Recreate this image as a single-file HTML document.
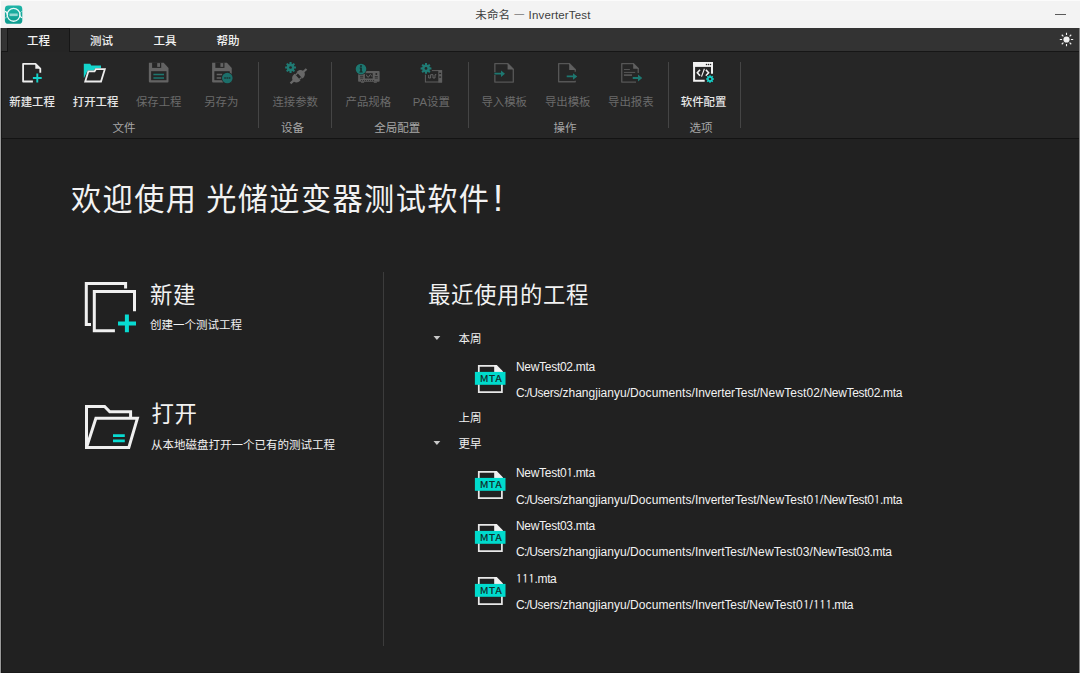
<!DOCTYPE html>
<html lang="zh-CN">
<head>
<meta charset="utf-8">
<title>未命名 — InverterTest</title>
<style>
*{box-sizing:border-box;margin:0;padding:0}
html,body{width:1080px;height:673px;overflow:hidden;background:#212121}
body{position:relative;font-family:"Liberation Sans","Noto Sans CJK SC",sans-serif;color:#f0f0f0;font-size:12px}
.abs{position:absolute}
svg{position:absolute;overflow:visible}
#titlebar{left:0;top:0;width:1080px;height:28px;background:#f3f3f3;border-top:1px solid #fbfbfb}
#title{left:475.3px;top:0;height:28px;line-height:29px;color:#404040;font-size:11.5px;white-space:pre;letter-spacing:0.15px}
#title i{font-style:normal;font-family:"Noto Sans CJK SC",sans-serif}
#tabbar{left:0;top:28px;width:1080px;height:24px;background:#333;border-bottom:1px solid #161616}
.tab{top:28px;height:23px;line-height:26.5px;text-align:center;color:#f2f2f2;font-size:11.5px;font-weight:500}
#tab1{left:7px;width:63px;top:28px;height:24px;background:#252525;border:1px solid #161616;border-bottom:none;line-height:24.5px}
#ribbon{left:0;top:52px;width:1080px;height:87px;background:#262626;border-bottom:1px solid #131313}
.lbl{top:95.4px;height:14px;line-height:14px;font-size:11.4px;font-weight:500;color:#e6e6e6;white-space:nowrap;width:80px;margin-left:-40px;text-align:center}
.lbl.dis{color:#6b6b6b;font-weight:400}
.ic{top:56px;width:40px;height:34px}
.grp{top:121px;height:14px;line-height:14px;font-size:11.5px;color:#a6a6a6;text-align:center;width:80px;margin-left:-40px}
.sep{top:61.5px;width:1px;height:66.5px;background:#454545}
#lb{left:0;top:28px;width:1px;height:645px;background:#9a9a9a}
#lb2{left:1px;top:51px;width:1px;height:622px;background:#171717}
#lb3{left:1px;top:28px;width:1px;height:23px;background:#262626}
#lb0{left:0;top:0;width:1px;height:28px;background:#fcfcfc}
#rbd{left:1079px;top:28px;width:1px;height:645px;background:#888}
#bb{left:2px;top:672px;width:1077px;height:1px;background:#1a1a1a}
#welcome{left:71px;top:177px;font-size:30.2px;line-height:46px;font-weight:400;color:#f2f2f2;white-space:pre;letter-spacing:1.4px;word-spacing:-1px}
.h2{font-size:22.4px;letter-spacing:0.6px;line-height:30px;color:#f2f2f2;font-weight:400;white-space:nowrap}
.sub{font-size:11.5px;line-height:14px;color:#f2f2f2;white-space:nowrap}
#vdiv{left:383px;top:272px;width:1px;height:374px;background:#3c3c3c}
.tr{font-size:11.5px;line-height:16px;color:#f2f2f2;white-space:nowrap}
.fn{font-size:12px;line-height:16px;color:#f2f2f2;white-space:nowrap;letter-spacing:-0.3px}
.pth{font-size:12px;line-height:16px;color:#f2f2f2;white-space:nowrap;letter-spacing:-0.1px}
.fn i,.pth i{font-style:normal;font-family:"IPAGothic","NanumGothic",sans-serif;margin:0 0.3px 0 0.35px}
.arrow{width:0;height:0;border-left:3.3px solid transparent;border-right:3.3px solid transparent;border-top:3.6px solid #c8c8c8}
.mta{width:34px;height:32px}
.mta text{font-family:"Noto Sans CJK SC",sans-serif;font-weight:500;font-size:9.5px;letter-spacing:0.3px;fill:#0f3330}
</style>
</head>
<body>
<div id="titlebar" class="abs"></div>
<div id="title" class="abs">未命名 <i>—</i> InverterTest</div>
<svg class="abs" style="left:0px;top:0px;width:28px;height:28px" viewBox="0 0 28 28">
<defs><linearGradient id="lg" x1="0" y1="0" x2="0" y2="1"><stop offset="0" stop-color="#20b5a8"/><stop offset="1" stop-color="#0c9b8e"/></linearGradient></defs>
<rect x="4.9" y="5.6" width="17.4" height="18.2" rx="3.4" fill="url(#lg)"/>
<circle cx="13.6" cy="14.85" r="6.4" fill="none" stroke="#ecf9f7" stroke-width="1.3"/>
<path d="M4.9 11.3C6.6 11.3 7.1 13 7.7 15.1M19.5 14.6C20.1 16.6 20.9 17.6 22.3 17.6" fill="none" stroke="#ecf9f7" stroke-width="1.3"/>
<path d="M4.9 18C6.4 18 7 16.8 7.5 15.2M19.7 14.6C20.2 12.6 20.9 11.4 22.3 11.4" fill="none" stroke="#ecf9f7" stroke-width="1" opacity=".6"/>
<rect x="9.5" y="13.5" width="8.2" height="2.6" fill="#bfeae5" opacity=".75"/>
</svg>
<div class="abs" style="left:1055px;top:13.5px;width:10.5px;height:1.3px;background:#5a5a5a"></div>

<div id="tabbar" class="abs"></div>
<div id="tab1" class="abs tab">工程</div>
<div class="abs tab" style="left:70px;width:63px">测试</div>
<div class="abs tab" style="left:133.5px;width:63px">工具</div>
<div class="abs tab" style="left:196.5px;width:63px">帮助</div>
<svg class="abs" style="left:1058px;top:31px;width:17px;height:17px" viewBox="-8.5 -8.5 17 17">
<circle r="3.1" fill="#f0f0f0"/>
<g stroke="#f0f0f0" stroke-width="1.1" stroke-linecap="butt">
<path d="M0-4.4V-6.7M0 4.4V6.7M-4.4 0H-6.7M4.4 0H6.7M3.1-3.1L4.75-4.75M-3.1-3.1L-4.75-4.75M3.1 3.1L4.75 4.75M-3.1 3.1L-4.75 4.75"/>
</g></svg>
<div id="ribbon" class="abs"></div>

<!-- ribbon icons -->
<svg class="abs ic" style="left:14px" viewBox="0 0 40 34">
<path d="M18.9 25.5H9.1V7.8H21.5L26.3 12.6V16.7" fill="none" stroke="#ededed" stroke-width="1.8" stroke-linejoin="round"/>
<path d="M21.3 7.8V12.8H26.3Z" fill="#ededed"/>
<path d="M18.9 22H27.7M23.3 17.6V26.4" stroke="#14d4cc" stroke-width="1.9" fill="none"/>
</svg>
<svg class="abs ic" style="left:75px" viewBox="0 0 40 34">
<path d="M8.8 7.8H15.2L16.2 9.6H26V12.2H20.2L19 14.4H12.6L9.1 21.7H8.8Z" fill="#14d4cc"/>
<path d="M10.2 25.5H26L29.8 13.2H20.8L19.5 15.4H13.3Z" fill="none" stroke="#ededed" stroke-width="1.8"/>
</svg>
<svg class="abs ic" style="left:139px" viewBox="0 0 40 34">
<path d="M9.85 6.8H24.7L29.5 11.9V25.5a1 1 0 0 1-1 1H10.85a1 1 0 0 1-1-1Z" fill="#636363"/>
<rect x="13.1" y="6.5" width="9.1" height="5.4" fill="#262626"/>
<rect x="18.2" y="7.1" width="2.8" height="3.8" fill="#636363"/>
<rect x="12.1" y="15.2" width="15.4" height="9" fill="#262626"/>
<path d="M14.4 18.4H25M14.4 22H25" stroke="#1d7770" stroke-width="1.5" fill="none"/>
</svg>
<svg class="abs ic" style="left:201px" viewBox="0 0 40 34">
<g transform="translate(1.25 0)">
<path d="M9.85 6.8H24.7L29.5 11.9V25.5a1 1 0 0 1-1 1H10.85a1 1 0 0 1-1-1Z" fill="#636363"/>
<rect x="13.1" y="6.5" width="9.1" height="5.4" fill="#262626"/>
<rect x="18.2" y="7.1" width="2.8" height="3.8" fill="#636363"/>
<rect x="12.1" y="15.2" width="15.4" height="9" fill="#262626"/>
</g>
<path d="M15.7 18.4H21.2M15.7 22H20.4" stroke="#636363" stroke-width="1.5" fill="none"/>
<circle cx="26.3" cy="22" r="6" fill="#262626"/>
<circle cx="26.3" cy="22" r="5.3" fill="#1c6f6a"/>
<path d="M23.2 22H24.9M25.45 22H27.15M27.7 22H29.4" stroke="#1e3433" stroke-width="1.5" fill="none"/>
</svg>
<svg class="abs ic" style="left:275px" viewBox="0 0 40 34">
<path d="M14.46 7.75L14.56 6.09L16.54 6.09L16.64 7.75L17.43 8.08L18.68 6.98L20.07 8.37L18.97 9.62L19.30 10.41L20.96 10.51L20.96 12.49L19.30 12.59L18.97 13.38L20.07 14.63L18.68 16.02L17.43 14.92L16.64 15.25L16.54 16.91L14.56 16.91L14.46 15.25L13.67 14.92L12.42 16.02L11.03 14.63L12.13 13.38L11.80 12.59L10.14 12.49L10.14 10.51L11.80 10.41L12.13 9.62L11.03 8.37L12.42 6.98L13.67 8.08Z" fill="#1f7a73"/>
<circle cx="15.55" cy="11.5" r="1.35" fill="#262626"/>
<g transform="translate(23.5 20.2) rotate(-42)" fill="#686868">
<path d="M-1.3-4.4V4.4H-2.6C-5 4.4-6.6 2.6-7 1.1H-10.8V-1.1H-7C-6.6-2.6-5-4.4-2.6-4.4Z"/>
<path d="M1.3-4.4V4.4H2.6C5 4.4 6.6 2.6 7 1.1H10.8V-1.1H7C6.6-2.6 5-4.4 2.6-4.4Z"/>
<rect x="-1.4" y="-3.6" width="2.8" height="1.3"/>
<rect x="-1.4" y="2.3" width="2.8" height="1.3"/>
</g>
</svg>
<svg class="abs ic" style="left:348px" viewBox="0 0 40 34">
<rect x="10.1" y="14.9" width="21.5" height="10.9" rx="0.8" fill="#5e5e5e"/>
<rect x="13.1" y="25.6" width="3" height="1.2" fill="#5e5e5e"/><rect x="25.8" y="25.6" width="3" height="1.2" fill="#5e5e5e"/>
<rect x="16.9" y="17.2" width="7.8" height="5.3" fill="#262626"/>
<path d="M17.9 18.6c1.1 0 1 2.7 2.2 2.7s1.1-2.7 2.2-2.7 1 1.4 1.6 2" stroke="#6a6a6a" fill="none" stroke-width="0.9"/>
<path d="M12.1 20.3H15.2M12.1 22.1H15.2M26.8 20.6H29.8M26.8 22.1H29.8" stroke="#262626" stroke-width="0.8"/>
<circle cx="28.3" cy="17.9" r="1" fill="#262626"/>
<path d="M13.1 24.5H26.6" stroke="#262626" stroke-width="0.8" stroke-dasharray="1 1"/>
<circle cx="13" cy="13.1" r="6" fill="#262626"/>
<circle cx="13" cy="13.1" r="5.3" fill="#1d7770"/>
<circle cx="13" cy="10" r="0.95" fill="#152b2a"/>
<path d="M11.7 11.6H13.8V15.6H14.7V16.5H11.4V15.6H12.3V12.4H11.7Z" fill="#152b2a"/>
</svg>
<svg class="abs ic" style="left:411px" viewBox="0 0 40 34">
<rect x="14.4" y="14.6" width="16.2" height="11.4" fill="none" stroke="#5e5e5e" stroke-width="1"/>
<rect x="27.3" y="14.1" width="3.8" height="12.4" fill="#5e5e5e"/>
<rect x="28.2" y="16.8" width="1.9" height="1.3" fill="#262626"/><rect x="28.2" y="20.4" width="1.9" height="1.3" fill="#262626"/>
<path d="M17.7 19v3h1.9v-3.3h2.4v3.3h2v-3.3h1.3" stroke="#6a6a6a" fill="none" stroke-width="0.9"/>
<circle cx="15" cy="12.4" r="6.3" fill="#262626"/>
<path d="M13.91 8.65L14.01 6.99L15.99 6.99L16.09 8.65L16.88 8.98L18.13 7.88L19.52 9.27L18.42 10.52L18.75 11.31L20.41 11.41L20.41 13.39L18.75 13.49L18.42 14.28L19.52 15.53L18.13 16.92L16.88 15.82L16.09 16.15L15.99 17.81L14.01 17.81L13.91 16.15L13.12 15.82L11.87 16.92L10.48 15.53L11.58 14.28L11.25 13.49L9.59 13.39L9.59 11.41L11.25 11.31L11.58 10.52L10.48 9.27L11.87 7.88L13.12 8.98Z" fill="#1f7a73"/>
<circle cx="15" cy="12.4" r="1.35" fill="#262626"/>
</svg>
<svg class="abs ic" style="left:484px" viewBox="0 0 40 34">
<path d="M10.85 7.55H23.6L29.3 13.2V26.05H10.85Z" fill="none" stroke="#565656" stroke-width="1.35" stroke-linejoin="round"/>
<path d="M23.6 7.2V13.5H29.8Z" fill="#606060"/>
<path d="M9.9 16.3H17V13.9L21.6 17.7L17 21.5V19.1H9.9Z" fill="#262626"/>
<path d="M10.4 16.8H17V14.4L21 17.7L17 21V18.6H10.4Z" fill="#1d7770"/>
</svg>
<svg class="abs ic" style="left:547px" viewBox="0 0 40 34">
<path d="M28.25 15.7V13.5L22.2 7.55H11.65V25.75H28.25V24.7" fill="none" stroke="#565656" stroke-width="1.35" stroke-linejoin="round"/>
<path d="M22.2 7.2V13.9H28.8Z" fill="#606060"/>
<path d="M19.2 19.05H26V16.65L30.9 20.45L26 24.25V21.85H19.2Z" fill="#262626"/>
<path d="M19.7 19.55H26V17.15L30.3 20.45L26 23.75V21.35H19.7Z" fill="#1d7770"/>
</svg>
<svg class="abs ic" style="left:611px" viewBox="0 0 40 34">
<path d="M27.25 16.9V12.4L22.2 7.55H10.75V26.05H25" fill="none" stroke="#565656" stroke-width="1.35" stroke-linejoin="round"/>
<path d="M22.2 7.2V12.8H28Z" fill="#606060"/>
<path d="M12.9 13.5H18.9" stroke="#585858" stroke-width="0.9"/><path d="M12.9 16.4H24.2" stroke="#585858" stroke-width="1"/><path d="M12.9 19.1H21" stroke="#585858" stroke-width="1.6"/>
<path d="M21.2 20.6H27V18L31.9 22L27 26V23.4H21.2Z" fill="#262626"/>
<path d="M21.7 21.1H27V18.5L31.3 22L27 25.5V22.9H21.7Z" fill="#1d7770"/>
</svg>
<svg class="abs ic" style="left:684px" viewBox="0 0 40 34">
<path d="M20.7 24.8H10.1V7.1H28V17.7" fill="none" stroke="#f2f2f2" stroke-width="2"/>
<rect x="9.1" y="6.1" width="19.9" height="4.8" fill="#f2f2f2"/>
<circle cx="22.5" cy="8.4" r=".75" fill="#262626"/><circle cx="24.5" cy="8.4" r=".75" fill="#262626"/><circle cx="26.5" cy="8.4" r=".75" fill="#262626"/>
<path d="M16 13.8L13.3 16.8L16 19.8M21.9 13.8L24.6 16.8L21.9 19.8" fill="none" stroke="#f2f2f2" stroke-width="1.6"/>
<path d="M20.4 12.8L17.5 20.6" fill="none" stroke="#f2f2f2" stroke-width="1.1"/>
<circle cx="26" cy="23" r="4.6" fill="#262626"/>
<path d="M25.17 20.22L25.27 19.17L26.73 19.17L26.83 20.22L27.38 20.45L28.19 19.77L29.23 20.81L28.55 21.62L28.78 22.17L29.83 22.27L29.83 23.73L28.78 23.83L28.55 24.38L29.23 25.19L28.19 26.23L27.38 25.55L26.83 25.78L26.73 26.83L25.27 26.83L25.17 25.78L24.62 25.55L23.81 26.23L22.77 25.19L23.45 24.38L23.22 23.83L22.17 23.73L22.17 22.27L23.22 22.17L23.45 21.62L22.77 20.81L23.81 19.77L24.62 20.45Z" fill="#14d4cc"/>
<circle cx="26" cy="23" r="1.35" fill="#262626"/>
</svg>

<div class="abs lbl" style="left:32.1px">新建工程</div>
<div class="abs lbl" style="left:95.6px">打开工程</div>
<div class="abs lbl dis" style="left:158.7px">保存工程</div>
<div class="abs lbl dis" style="left:221.3px">另存为</div>
<div class="abs sep" style="left:258px"></div>
<div class="abs lbl dis" style="left:295.2px">连接参数</div>
<div class="abs sep" style="left:331px"></div>
<div class="abs lbl dis" style="left:368.3px">产品规格</div>
<div class="abs lbl dis" style="left:431.3px">PA设置</div>
<div class="abs sep" style="left:468px"></div>
<div class="abs lbl dis" style="left:504.2px">导入模板</div>
<div class="abs lbl dis" style="left:567.7px">导出模板</div>
<div class="abs lbl dis" style="left:630.8px">导出报表</div>
<div class="abs sep" style="left:668px"></div>
<div class="abs lbl" style="left:703.6px">软件配置</div>
<div class="abs sep" style="left:740px"></div>

<div class="abs grp" style="left:124px">文件</div>
<div class="abs grp" style="left:292.6px">设备</div>
<div class="abs grp" style="left:397.2px">全局配置</div>
<div class="abs grp" style="left:565.1px">操作</div>
<div class="abs grp" style="left:701.1px">选项</div>

<div id="welcome" class="abs">欢迎使用 光储逆变器测试软件<span style="margin-left:2.6px;font-size:36px;line-height:0;position:relative;top:1px;font-weight:400">!</span></div>

<!-- new icon -->
<svg class="abs" style="left:78px;top:272px;width:70px;height:70px" viewBox="78 272 70 70">
<path d="M91 324.6H86.3V283.4H125.6V288.4" fill="none" stroke="#f0f0f0" stroke-width="3"/>
<path d="M114.9 330.8H94.3V291.4H134.5V311.3" fill="none" stroke="#f0f0f0" stroke-width="3"/>
<path d="M118 323.5H136M126.9 314.6V332.3" fill="none" stroke="#08dbd1" stroke-width="4"/>
</svg>
<!-- open icon -->
<svg class="abs" style="left:84.8px;top:394px;width:63.2px;height:55.1px;overflow:hidden" viewBox="84.8 394 63.2 55.1">
<path d="M86.3 447.6V406.4H104.4L109.6 411.7H130.4V417.4" fill="none" stroke="#f0f0f0" stroke-width="3"/>
<path d="M86.3 447.6L95.7 418.3H137.2L128.6 447.6Z" fill="none" stroke="#f0f0f0" stroke-width="3"/>
<path d="M112.8 435.6H124.6M112.8 440.8H124.6" fill="none" stroke="#08dbd1" stroke-width="2.8"/>
</svg>

<div class="abs h2" style="left:150px;top:280.5px">新建</div>
<div class="abs sub" style="left:150px;top:318px">创建一个测试工程</div>
<div class="abs h2" style="left:151.4px;top:400px">打开</div>
<div class="abs sub" style="left:151px;top:438px">从本地磁盘打开一个已有的测试工程</div>

<div id="vdiv" class="abs"></div>
<div class="abs h2" style="left:428px;top:280.5px">最近使用的工程</div>

<svg class="abs" style="left:430px;top:333px;width:14px;height:10px" viewBox="430 333 14 10"><path d="M433.5 336H440.3L436.9 339.9Z" fill="#c8c8c8"/></svg>
<div class="abs tr" style="left:458.5px;top:330.5px">本周</div>
<div class="abs tr" style="left:458.5px;top:410.3px">上周</div>
<svg class="abs" style="left:430px;top:438.2px;width:14px;height:10px" viewBox="430 333 14 10"><path d="M433.5 336H440.3L436.9 339.9Z" fill="#c8c8c8"/></svg>
<div class="abs tr" style="left:458.5px;top:436.3px">更早</div>

<svg class="abs mta" style="left:473px;top:364px" viewBox="473 364 34 32"><path d="M495.3 365.95H478.8V392.1H501.9V371.5" fill="none" stroke="#e8e8e8" stroke-width="1.75"/><path d="M494.2 365.05H496.8L502.8 371.2V372H494.2Z" fill="#f0f0f0"/><rect x="474.9" y="371.9" width="30.6" height="12.9" fill="#00dbcd"/><text transform="translate(490.9 382) scale(1.12 1)" text-anchor="middle">MTA</text></svg>
<svg class="abs mta" style="left:473px;top:469.5px" viewBox="473 364 34 32"><path d="M495.3 365.95H478.8V392.1H501.9V371.5" fill="none" stroke="#e8e8e8" stroke-width="1.75"/><path d="M494.2 365.05H496.8L502.8 371.2V372H494.2Z" fill="#f0f0f0"/><rect x="474.9" y="371.9" width="30.6" height="12.9" fill="#00dbcd"/><text transform="translate(490.9 382) scale(1.12 1)" text-anchor="middle">MTA</text></svg>
<svg class="abs mta" style="left:473px;top:522.5px" viewBox="473 364 34 32"><path d="M495.3 365.95H478.8V392.1H501.9V371.5" fill="none" stroke="#e8e8e8" stroke-width="1.75"/><path d="M494.2 365.05H496.8L502.8 371.2V372H494.2Z" fill="#f0f0f0"/><rect x="474.9" y="371.9" width="30.6" height="12.9" fill="#00dbcd"/><text transform="translate(490.9 382) scale(1.12 1)" text-anchor="middle">MTA</text></svg>
<svg class="abs mta" style="left:473px;top:575.5px" viewBox="473 364 34 32"><path d="M495.3 365.95H478.8V392.1H501.9V371.5" fill="none" stroke="#e8e8e8" stroke-width="1.75"/><path d="M494.2 365.05H496.8L502.8 371.2V372H494.2Z" fill="#f0f0f0"/><rect x="474.9" y="371.9" width="30.6" height="12.9" fill="#00dbcd"/><text transform="translate(490.9 382) scale(1.12 1)" text-anchor="middle">MTA</text></svg>

<div class="abs fn" style="left:516px;top:359px">NewTest02.mta</div>
<div class="abs pth" style="left:516px;top:385.2px"><span style="letter-spacing:-0.74px">C:/</span><span style="letter-spacing:-0.23px">Users/</span><span style="letter-spacing:0.02px">zhangjianyu/</span><span style="letter-spacing:0.08px">Documents/</span><span style="letter-spacing:-0.08px">InverterTest/</span><span style="letter-spacing:0.09px">NewTest02/</span><span style="letter-spacing:-0.31px">NewTest02.mta</span></div>
<div class="abs fn" style="left:516px;top:464px">NewTest0<i>1</i>.mta</div>
<div class="abs pth" style="left:516px;top:490.7px"><span style="letter-spacing:-0.74px">C:/</span><span style="letter-spacing:-0.23px">Users/</span><span style="letter-spacing:0.02px">zhangjianyu/</span><span style="letter-spacing:0.08px">Documents/</span><span style="letter-spacing:-0.08px">InverterTest/</span><span style="letter-spacing:0.09px">NewTest0<i>1</i>/</span><span style="letter-spacing:-0.31px">NewTest0<i>1</i>.mta</span></div>
<div class="abs fn" style="left:516px;top:518px">NewTest03.mta</div>
<div class="abs pth" style="left:516px;top:543.7px"><span style="letter-spacing:-0.74px">C:/</span><span style="letter-spacing:-0.23px">Users/</span><span style="letter-spacing:0.02px">zhangjianyu/</span><span style="letter-spacing:0.08px">Documents/</span><span style="letter-spacing:-0.08px">InvertTest/</span><span style="letter-spacing:0.09px">NewTest03/</span><span style="letter-spacing:-0.31px">NewTest03.mta</span></div>
<div class="abs fn" style="left:516px;top:570px;letter-spacing:-0.35px;margin-left:-0.4px"><i>1</i><i>1</i><i>1</i>.mta</div>
<div class="abs pth" style="left:516px;top:595.8px"><span style="letter-spacing:-0.74px">C:/</span><span style="letter-spacing:-0.23px">Users/</span><span style="letter-spacing:0.02px">zhangjianyu/</span><span style="letter-spacing:0.08px">Documents/</span><span style="letter-spacing:-0.08px">InvertTest/</span><span style="letter-spacing:0.09px">NewTest0<i>1</i>/</span><span style="letter-spacing:-0.48px"><i>1</i><i>1</i><i>1</i>.mta</span></div>

<div id="lb" class="abs"></div>
<div id="lb2" class="abs"></div><div id="lb3" class="abs"></div><div id="lb0" class="abs"></div>
<div id="rbd" class="abs"></div>
<div id="bb" class="abs"></div>
</body>
</html>
